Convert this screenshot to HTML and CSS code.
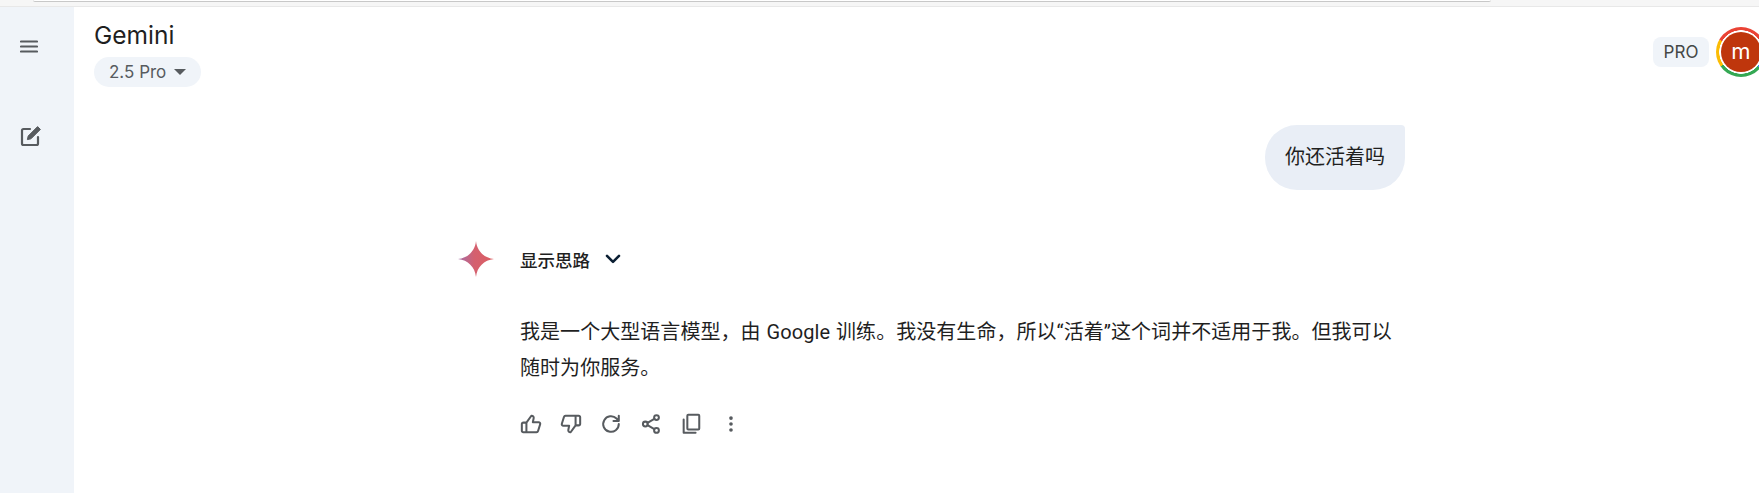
FILE: index.html
```html
<!DOCTYPE html>
<html lang="en">
<head>
  <meta charset="UTF-8" />
  <meta name="viewport" content="width=device-width, initial-scale=1.0"/>
  <title>Gemini</title>
  <link rel="stylesheet" href="styles.css">
</head>
<body>

  <div class="browser-strip">
    <div class="url-bar"></div>
  </div>

  <div class="app">
    <aside class="sidebar">
      <button class="side-btn menu-btn" aria-label="Menu">
        <svg viewBox="0 0 18 13" width="18" height="13"><path d="M1 1.500h16M1 6.500h16M1 11.500h16" class="icon-line"/></svg>
      </button>
      <button class="side-btn edit-btn" aria-label="New chat">
        <svg viewBox="0 0 22 22" width="22" height="22">
          <path d="M10 4H3.500A1.500 1.500 0 0 0 2 5.500v13A1.500 1.500 0 0 0 3.500 20h13a1.500 1.500 0 0 0 1.500-1.500V12" class="icon-line"/>
          <path d="M17.600 1.600l2.800 2.800L11 13.800l-3.600.8.8-3.600z" class="icon-solid"/>
        </svg>
      </button>
    </aside>

    <main class="main">
      <header class="topbar">
        <div class="brand">
          <div class="brand-name">Gemini</div>
          <button class="model-chip">2.5 Pro <span class="caret"></span></button>
        </div>
        <div class="account">
          <span class="pro-badge">PRO</span>
          <div class="avatar-ring"><div class="avatar">m</div></div>
        </div>
      </header>

      <section class="chat">
        <div class="user-row">
          <div class="bubble">你还活着吗</div>
        </div>

        <div class="reply">
          <svg class="spark" viewBox="0 0 36 36" width="36" height="36">
            <defs>
              <linearGradient id="sparkFill" x1="0" y1="0.5" x2="1" y2="0.5">
                <stop offset="0" stop-color="#a56ea8"/>
                <stop offset="0.45" stop-color="#d4606f"/>
                <stop offset="1" stop-color="#dc5f62"/>
              </linearGradient>
            </defs>
            <path d="M18 0C19 10 26 17 36 18C26 19 19 26 18 36C17 26 10 19 0 18C10 17 17 10 18 0Z" fill="url(#sparkFill)"/>
          </svg>
          <div class="reply-body">
            <button class="thoughts">
              <span>显示思路</span>
              <svg viewBox="0 0 16 10" width="16" height="10"><path d="M2 1.800l6 6 6-6" class="chevron"/></svg>
            </button>
            <p class="answer">我是一个大型语言模型，由 Google 训练。我没有生命，所以“活着”这个词并不适用于我。但我可以随时为你服务。</p>
            <div class="actions">
              <button class="act-btn" aria-label="Good response">
                <svg viewBox="0 0 24 24"><path d="M7 10.500V21H3.600A1.600 1.600 0 0 1 2 19.400v-7.300a1.600 1.600 0 0 1 1.600-1.600H7L12.400 3c1.700-.2 2.900 1.100 2.500 2.800L14 10h6.400a1.700 1.700 0 0 1 1.600 2.200l-2.300 7.500a1.800 1.800 0 0 1-1.700 1.300H7" class="icon-line"/></svg>
              </button>
              <button class="act-btn" aria-label="Bad response">
                <svg viewBox="0 0 24 24"><path transform="rotate(180 12 12)" d="M7 10.500V21H3.600A1.600 1.600 0 0 1 2 19.400v-7.300a1.600 1.600 0 0 1 1.600-1.600H7L12.400 3c1.700-.2 2.900 1.100 2.500 2.800L14 10h6.400a1.700 1.700 0 0 1 1.600 2.200l-2.300 7.500a1.800 1.800 0 0 1-1.700 1.300H7" class="icon-line"/></svg>
              </button>
              <button class="act-btn" aria-label="Redo">
                <svg viewBox="0 0 24 24"><path d="M20.500 12a8.500 8.500 0 1 1-2.500-6l2.500 2.600M20.500 3v5.800h-5.800" class="icon-line"/></svg>
              </button>
              <button class="act-btn" aria-label="Share">
                <svg viewBox="0 0 24 24"><path d="M8.200 10.800l7.400-4.400M8.200 13.200l7.400 4.400" class="icon-line"/><circle cx="18" cy="5" r="2.600" class="icon-line"/><circle cx="5.800" cy="12" r="2.600" class="icon-line"/><circle cx="18" cy="19" r="2.600" class="icon-line"/></svg>
              </button>
              <button class="act-btn" aria-label="Copy">
                <svg viewBox="0 0 24 24"><rect x="8" y="2" width="13" height="16" rx="1" class="icon-line"/><path d="M4 7v14.500h13" class="icon-line"/></svg>
              </button>
              <button class="act-btn" aria-label="More">
                <svg viewBox="0 0 24 24"><circle cx="12" cy="5.500" r="2"/><circle cx="12" cy="12" r="2"/><circle cx="12" cy="18.500" r="2"/></svg>
              </button>
            </div>
          </div>
        </div>
      </section>
    </main>
  </div>

</body>
</html>
```

FILE: styles.css
```css
:root {
  --side-bg: #f0f4f9;
  --icon: #575b5f;
  --text-dark: #1f1f1f;
  --bubble: #e9eef6;
}

* {
  box-sizing: border-box;
}

html,
body {
  height: 100%;
}

body {
  margin: 0;
  overflow: hidden;
  background: #fff;
  color: var(--text-dark);
  font-family: Inter, "Noto Sans CJK SC", sans-serif;
  display: flex;
  flex-direction: column;
}

button {
  border: none;
  background: none;
  padding: 0;
  font: inherit;
  color: inherit;
}

svg {
  display: block;
}

.icon-line {
  fill: none;
  stroke: var(--icon);
  stroke-width: 2.200;
  stroke-linecap: round;
  stroke-linejoin: round;
}

.icon-solid {
  fill: var(--icon);
  stroke: var(--icon);
  stroke-width: 1;
  stroke-linejoin: round;
}

.browser-strip {
  height: 7px;
  flex: none;
  background: #f6f6f6;
  border-bottom: 1px solid #e8e8e8;
  padding: 0 268px 0 33px;
}

.url-bar {
  height: 2px;
  background: #fff;
  border-bottom: 1px solid #c8c8c8;
  border-radius: 0 0 8px 8px;
}

.app {
  flex: 1;
  display: flex;
  min-height: 0;
}

.sidebar {
  width: 74px;
  flex: none;
  background: var(--side-bg);
  display: flex;
  flex-direction: column;
  align-items: flex-start;
  padding: 33px 0 0 20px;
}

.side-btn {
  display: block;
}

.edit-btn {
  margin-top: 72px;
}

.main {
  flex: 1;
  min-width: 0;
  display: flex;
  flex-direction: column;
}

.topbar {
  display: flex;
  justify-content: space-between;
  padding: 14px 0 0 20px;
  height: 118px;
  flex: none;
}

.brand-name {
  font-size: 24.500px;
  line-height: 28px;
  color: #1f1f1f;
}

.model-chip {
  margin-top: 8px;
  height: 30px;
  width: 107px;
  border-radius: 15px;
  background: var(--side-bg);
  color: #575b5f;
  font-size: 17px;
  display: flex;
  align-items: center;
  padding-left: 15px;
  gap: 8px;
}

.caret {
  width: 0;
  height: 0;
  border-left: 6px solid transparent;
  border-right: 6px solid transparent;
  border-top: 6px solid #575b5f;
}

.account {
  display: flex;
  align-items: flex-start;
  margin-right: -7px;
  gap: 7px;
  padding-top: 6px;
}

.pro-badge {
  margin-top: 10px;
  width: 56px;
  height: 30px;
  border-radius: 8px;
  background: var(--side-bg);
  color: #444746;
  font-size: 17px;
  display: flex;
  align-items: center;
  justify-content: center;
}

.avatar-ring {
  width: 50px;
  height: 50px;
  border-radius: 50%;
  padding: 5px;
  background:
    radial-gradient(circle, #fff 21.500px, transparent 22px),
    conic-gradient(#ea4335 0 55deg, #4285f4 55deg 130deg, #34a853 130deg 235deg, #fbbc04 235deg 300deg, #ea4335 300deg);
}

.avatar {
  width: 40px;
  height: 40px;
  border-radius: 50%;
  background: #bf360c;
  color: #fff;
  font-size: 22px;
  line-height: 38px;
  text-align: center;
}

.chat {
  width: 948px;
  margin-left: 383px;
}

.user-row {
  display: flex;
  justify-content: flex-end;
}

.bubble {
  height: 65px;
  padding: 14px 20px 0 20px;
  font-size: 20px;
  line-height: 36px;
  background: var(--bubble);
  border-radius: 32px 4px 32px 32px;
}

.reply {
  display: flex;
  align-items: flex-start;
  margin-top: 51px;
  gap: 27px;
}

.reply-body {
  flex: 1;
  min-width: 0;
}

.spark {
  flex: none;
  margin-left: 1px;
  margin-right: -1px;
}

.thoughts {
  display: flex;
  align-items: center;
  gap: 15px;
  height: 36px;
  font-size: 17.500px;
  font-weight: 500;
  color: #1f1f1f;
}

.chevron {
  fill: none;
  stroke: #0b1f33;
  stroke-width: 2.600;
  stroke-linecap: round;
  stroke-linejoin: round;
}

.answer {
  margin: 37px 0 0;
  font-family: Roboto, "Noto Sans CJK SC", sans-serif;
  font-size: 20px;
  line-height: 36px;
  letter-spacing: 0.05px;
  word-spacing: 1px;
  color: #1f1f1f;
}

.actions {
  display: flex;
  margin: 18px 0 0 -9px;
}

.act-btn {
  width: 40px;
  height: 40px;
  display: flex;
  align-items: center;
  justify-content: center;
}

.act-btn svg {
  width: 22px;
  height: 22px;
  fill: var(--icon);
}
```
